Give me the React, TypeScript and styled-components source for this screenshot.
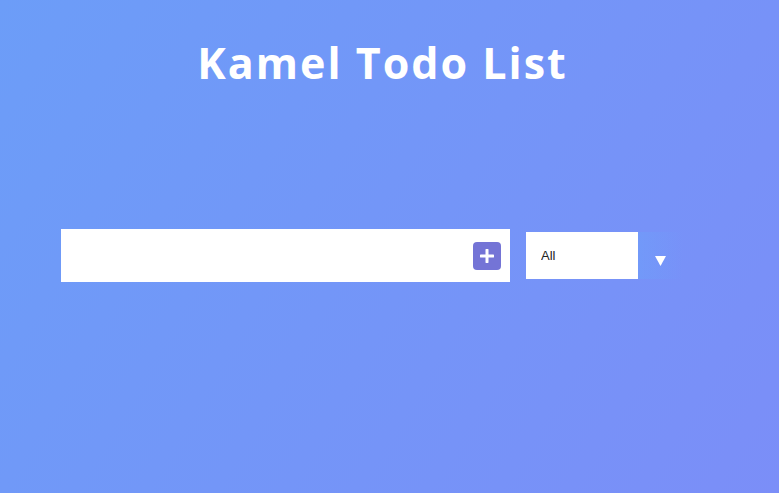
import React from "react";
import styled, { createGlobalStyle } from "styled-components";

const Global = createGlobalStyle`
  html, body { margin: 0; padding: 0; }
  body {
    min-height: 493px;
    background-image: linear-gradient(120deg, #6c9df8 0%, #7b8ef8 100%);
    font-family: "Liberation Sans", Arial, sans-serif;
  }
`;

const Page = styled.div`
  min-height: 493px;
  display: flex;
  flex-direction: column;
`;

const Header = styled.header`
  display: flex;
  justify-content: center;
  padding: 35px 14px 0 0;
`;

const Title = styled.h1`
  margin: 0;
  color: #ffffff;
  font-family: "Open Sans", "Noto Sans", sans-serif;
  font-weight: 700;
  font-size: 43px;
  line-height: 56px;
  letter-spacing: 2px;
`;

const Form = styled.form`
  display: flex;
  align-items: center;
  gap: 16px;
  padding: 138px 0 0 61px;
`;

const InputWrap = styled.div`
  width: 449px;
  height: 53px;
  background: #ffffff;
  display: flex;
  align-items: center;
  justify-content: flex-end;
  padding-right: 9px;
  box-sizing: border-box;
`;

const TextInput = styled.input`
  flex: 1;
  height: 100%;
  border: none;
  outline: none;
  background: transparent;
  font-size: 16px;
  padding: 0 12px;
`;

const AddButton = styled.button`
  width: 28px;
  height: 28px;
  border: none;
  border-radius: 4px;
  background: #7474d6;
  display: flex;
  align-items: center;
  justify-content: center;
  padding: 0;
  cursor: pointer;
`;

const SelectWrap = styled.div`
  display: flex;
  align-items: center;
`;

const Select = styled.select`
  appearance: none;
  -webkit-appearance: none;
  width: 112px;
  height: 47px;
  border: none;
  outline: none;
  background: #ffffff;
  color: #222;
  font-family: "Liberation Sans", Arial, sans-serif;
  font-size: 13px;
  padding: 0 15px;
  border-radius: 0;
`;

const Arrow = styled.div`
  width: 45px;
  height: 47px;
  display: flex;
  align-items: center;
  justify-content: center;
  padding-top: 10px;
  box-sizing: border-box;
  background: linear-gradient(90deg, rgba(108, 162, 250, 0.45), rgba(108, 162, 250, 0));
`;

export default function App() {
  return (
    <Page>
      <Global />
      <Header>
        <Title>Kamel Todo List</Title>
      </Header>
      <Form onSubmit={(e) => e.preventDefault()}>
        <InputWrap>
          <TextInput type="text" />
          <AddButton type="submit" aria-label="Add todo">
            <svg width="14" height="14" viewBox="0 0 14 14">
              <path d="M7 1v12M1 7h12" stroke="#fff" strokeWidth="3" strokeLinecap="round" />
            </svg>
          </AddButton>
        </InputWrap>
        <SelectWrap>
          <Select defaultValue="all" name="todos">
            <option value="all">All</option>
            <option value="completed">Completed</option>
            <option value="uncompleted">Uncompleted</option>
          </Select>
          <Arrow>
            <svg width="11" height="10" viewBox="0 0 11 10">
              <path d="M0 0h11L5.5 10z" fill="#fff" />
            </svg>
          </Arrow>
        </SelectWrap>
      </Form>
    </Page>
  );
}
